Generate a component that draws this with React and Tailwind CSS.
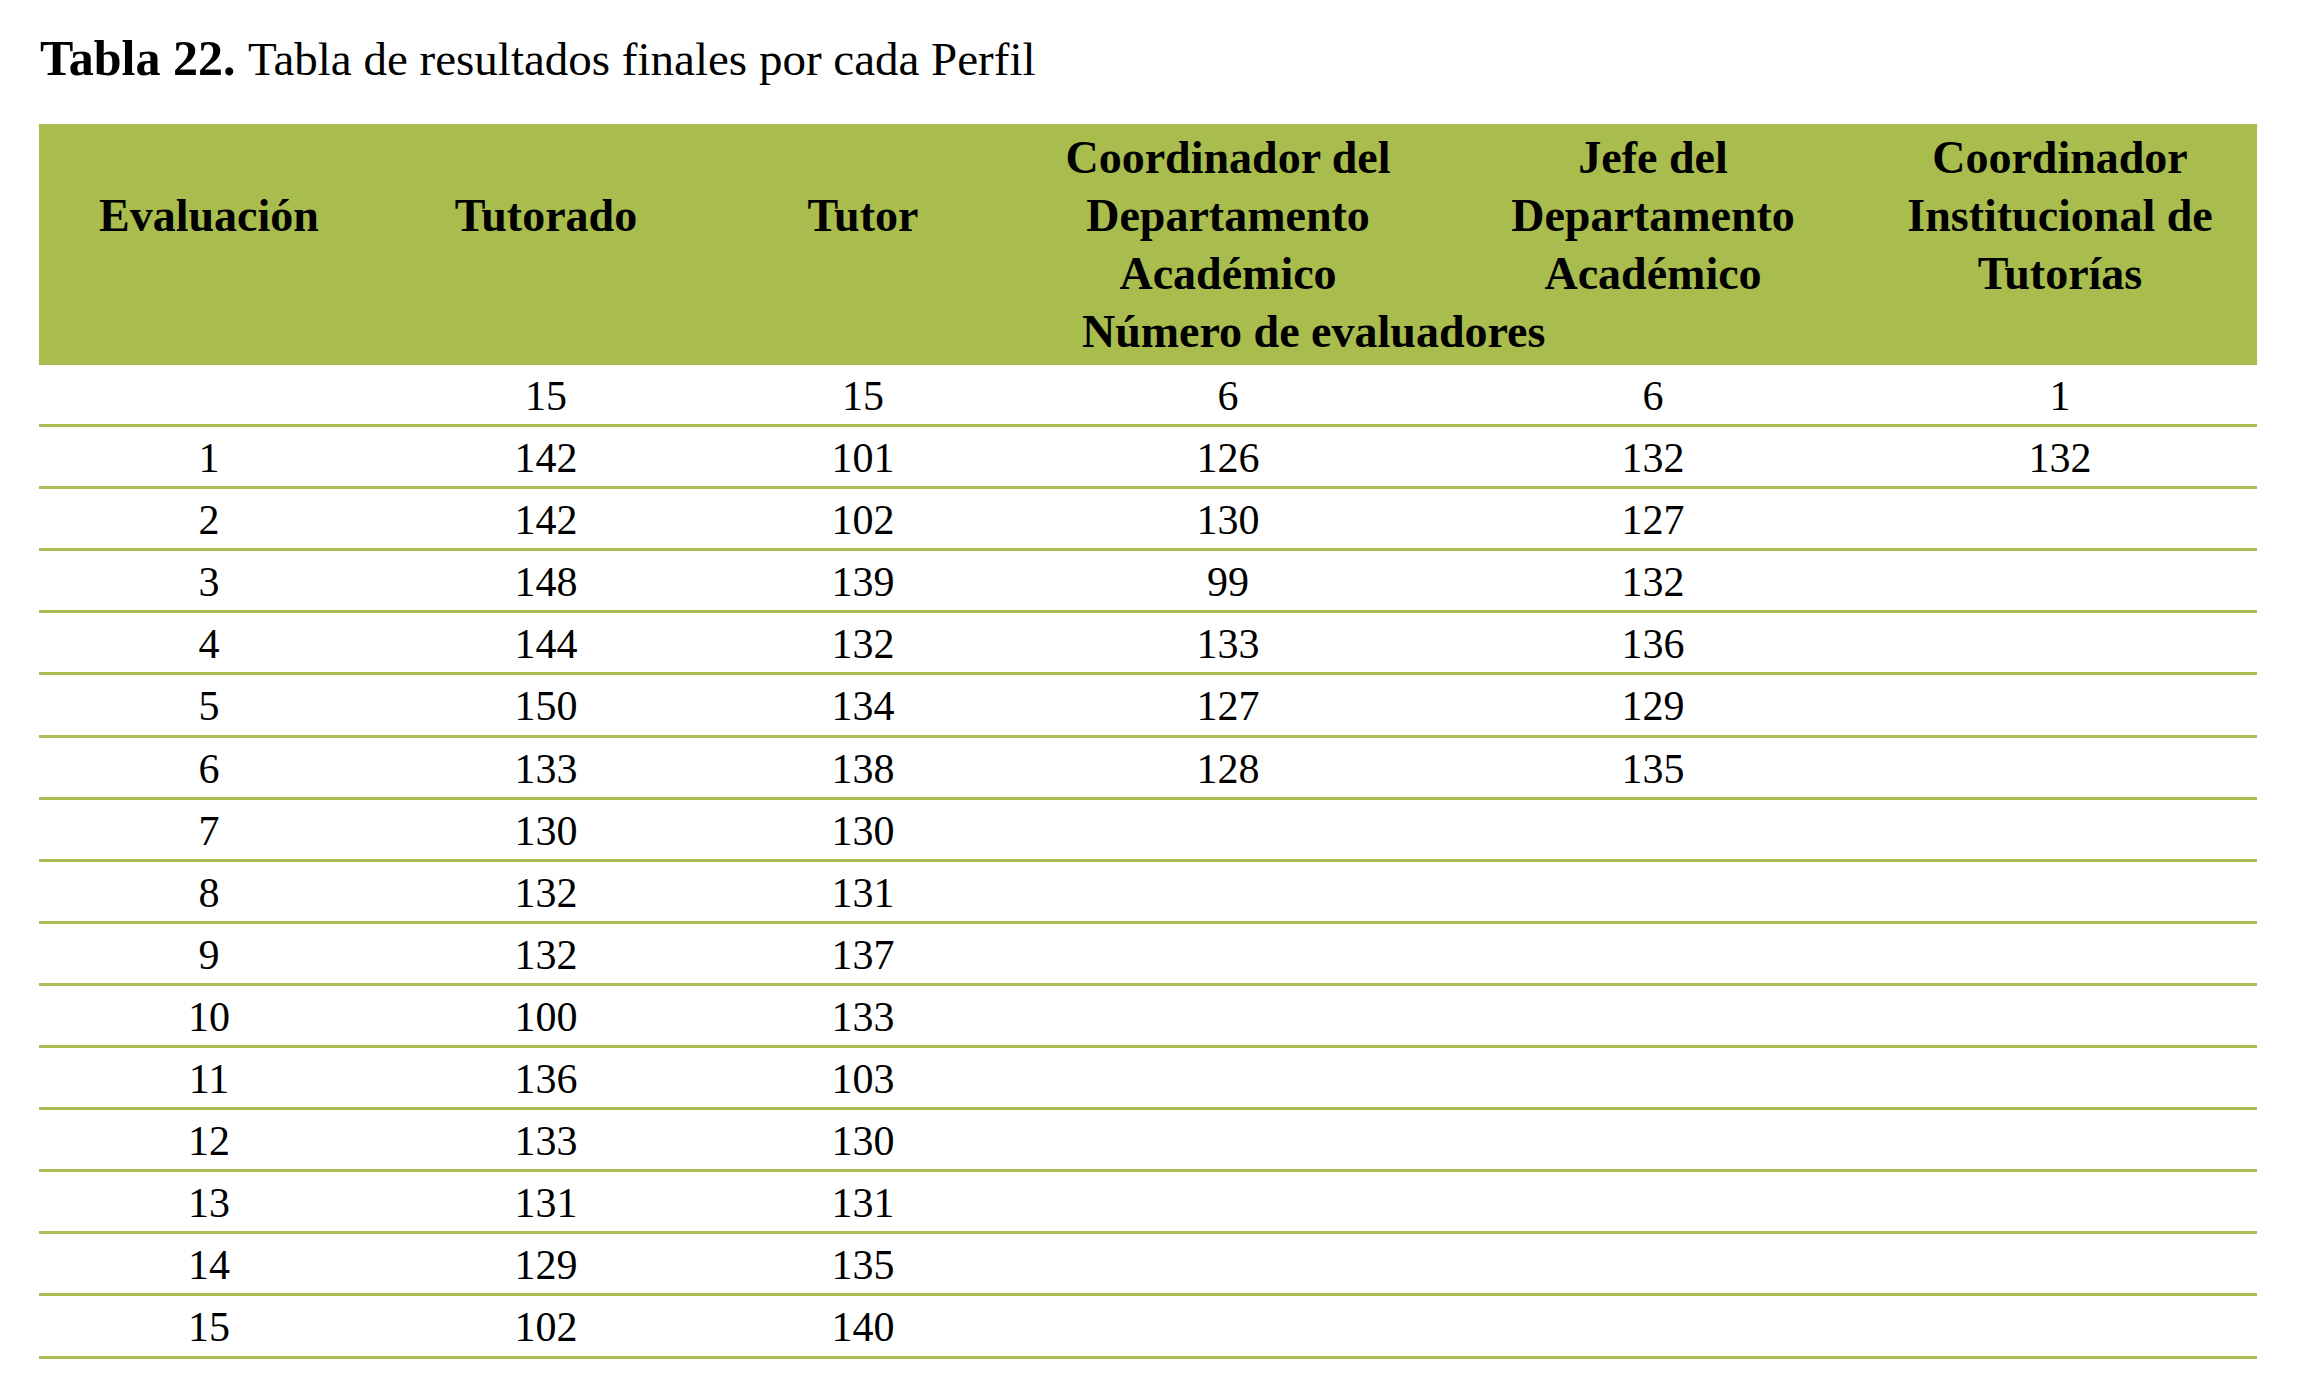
import React from 'react';

const serif = { fontFamily: '"Liberation Serif", "Times New Roman", serif' };

const cols = 'grid grid-cols-[340px_334px_300px_430px_420px_394px]';

const counts = ['', '15', '15', '6', '6', '1'];

const rows = [
  ['1', '142', '101', '126', '132', '132'],
  ['2', '142', '102', '130', '127', ''],
  ['3', '148', '139', '99', '132', ''],
  ['4', '144', '132', '133', '136', ''],
  ['5', '150', '134', '127', '129', ''],
  ['6', '133', '138', '128', '135', ''],
  ['7', '130', '130', '', '', ''],
  ['8', '132', '131', '', '', ''],
  ['9', '132', '137', '', '', ''],
  ['10', '100', '133', '', '', ''],
  ['11', '136', '103', '', '', ''],
  ['12', '133', '130', '', '', ''],
  ['13', '131', '131', '', '', ''],
  ['14', '129', '135', '', '', ''],
  ['15', '102', '140', '', '', ''],
];

// border-box: height includes the 3px rule
const Row = ({ cells }) => (
  <div className={`${cols} h-[62.1px] border-b-[3px] border-[#aabd52] text-[42px] leading-[63px] text-black`}>
    {cells.map((c, i) => (
      <div key={i} className="text-center">
        {c}
      </div>
    ))}
  </div>
);

const App = () => {
  return (
    <div className="min-h-screen w-full bg-white" style={serif}>
      {/* Caption */}
      <div className="pl-[40px] pt-[33px] text-[50px] leading-[50px] text-black whitespace-nowrap">
        <span className="font-bold">Tabla 22.</span>{' '}
        <span className="text-[47px]">Tabla de resultados finales por cada Perfil</span>
      </div>

      <div className="ml-[39px] mt-[40px] w-[2218px]">
        {/* Header */}
        <div className="bg-[#a9bc4e] pt-[5px] pb-[4px] text-[46px] font-bold leading-[58px] text-black">
          <div className={`${cols} items-center`}>
            <div className="text-center">Evaluación</div>
            <div className="text-center">Tutorado</div>
            <div className="text-center">Tutor</div>
            <div className="text-center">
              Coordinador del
              <br />
              Departamento
              <br />
              Académico
            </div>
            <div className="text-center">
              Jefe del
              <br />
              Departamento
              <br />
              Académico
            </div>
            <div className="text-center">
              Coordinador
              <br />
              Institucional de
              <br />
              Tutorías
            </div>
          </div>
          <div className="pl-[1043px] whitespace-nowrap">Número de evaluadores</div>
        </div>

        {/* Body */}
        <Row cells={counts} />
        {rows.map((r) => (
          <Row key={r[0]} cells={r} />
        ))}
      </div>
    </div>
  );
};

export default App;
